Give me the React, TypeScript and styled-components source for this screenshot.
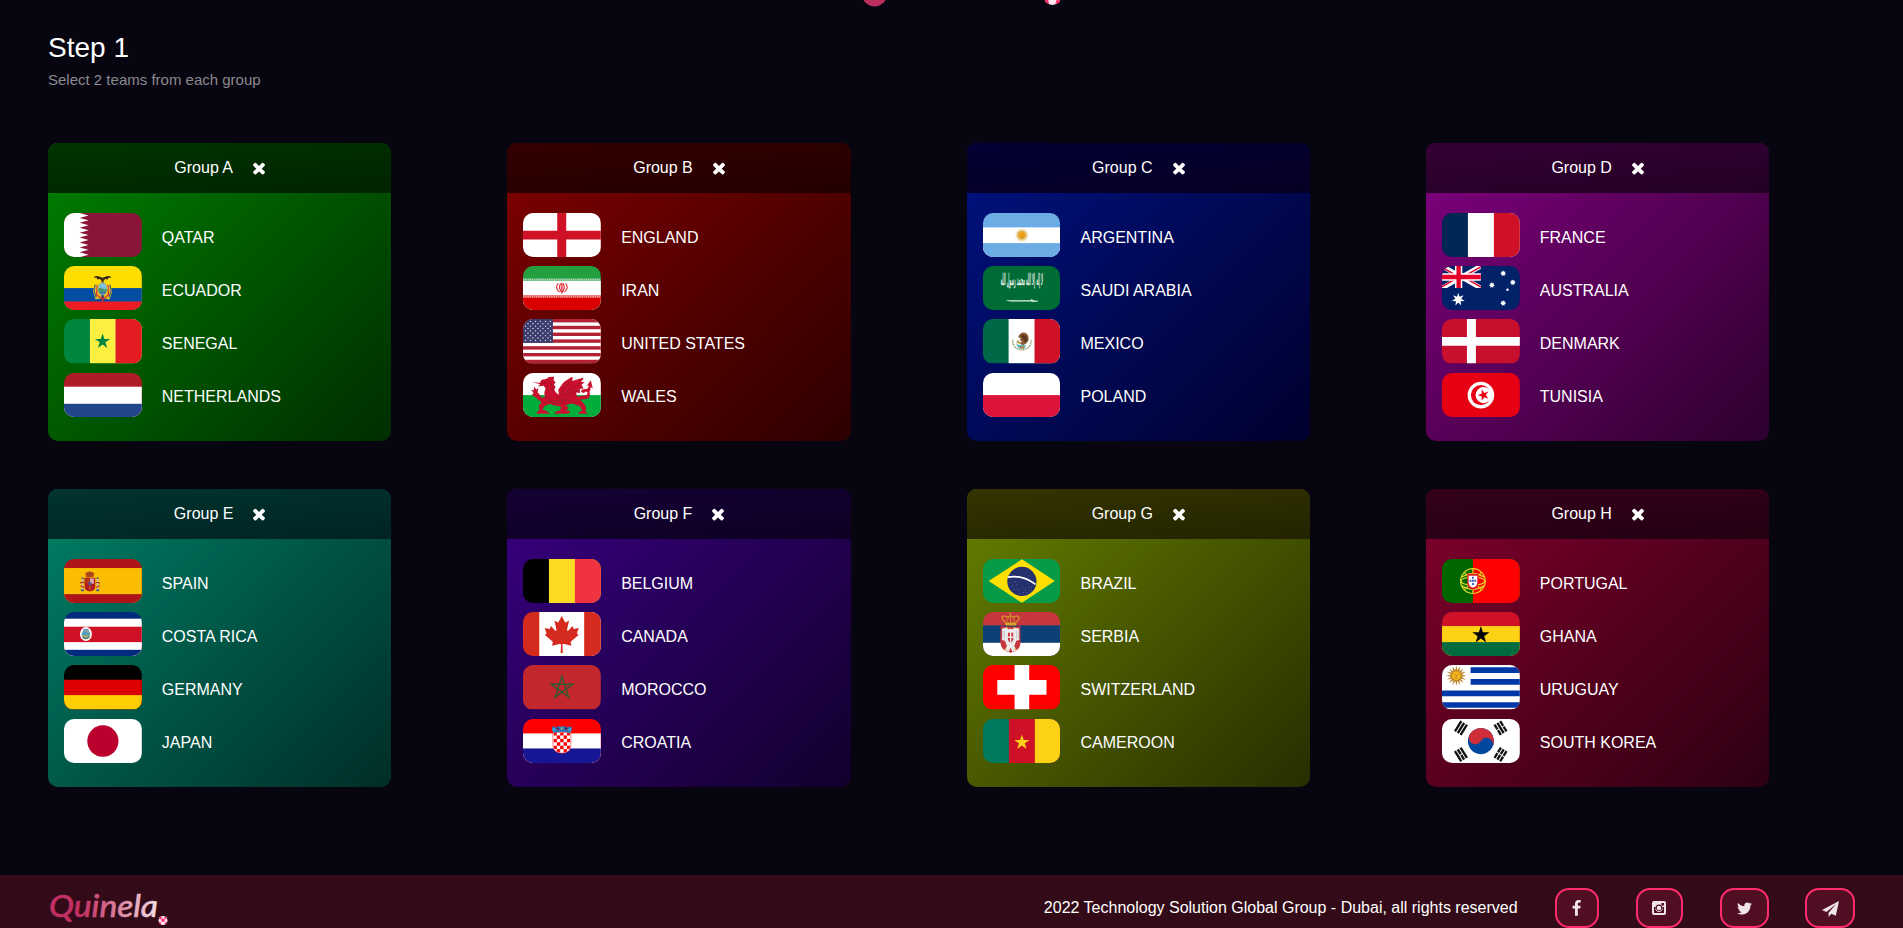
import React from "react";
import styled, { createGlobalStyle } from "styled-components";

const GlobalStyle = createGlobalStyle`
  *, *::before, *::after { box-sizing: border-box; }
  html, body { margin: 0; padding: 0; }
  body {
    background: #07050f;
    color: #fff;
    font-family: "Liberation Sans", Arial, Helvetica, sans-serif;
    font-size: 16px;
    overflow: hidden;
  }
`;

const Page = styled.div`
  display: flex;
  flex-direction: column;
  height: 928px;
  overflow: hidden;
`;

const TopBar = styled.header`
  display: flex;
  justify-content: center;
  height: 8px;
  padding-left: 20px;
`;

const Main = styled.main`
  flex: 1;
  padding: 0 48px;
`;

const Title = styled.h1`
  margin: 0;
  padding-top: 24px;
  font-size: 28px;
  font-weight: 400;
  line-height: 32px;
`;

const Subtitle = styled.p`
  margin: 7px 0 0;
  font-size: 15px;
  line-height: 18px;
  color: #8b8a8f;
`;

const Groups = styled.section`
  display: grid;
  grid-template-columns: repeat(4, 343.33px);
  column-gap: 116px;
  row-gap: 48px;
  margin-top: 54px;
`;

const Card = styled.article<{ $from: string; $to: string }>`
  height: 298px;
  border-radius: 10px;
  overflow: hidden;
  background: linear-gradient(135deg, ${(p) => p.$from}, ${(p) => p.$to});
`;

const CardHeader = styled.header<{ $from: string; $to: string }>`
  display: flex;
  align-items: center;
  justify-content: center;
  gap: 19px;
  height: 50px;
  padding-bottom: 1px;
  background: linear-gradient(175deg, ${(p) => p.$from}, ${(p) => p.$to});
`;

const ClearIcon = styled.svg`
  width: 18px;
  height: 18px;
  margin: 1px -3px 0 -2px;
  fill: #fff;
`;

const Teams = styled.ul`
  margin: 0;
  padding: 19.8px 16px 0;
  list-style: none;
`;

const Team = styled.li`
  display: flex;
  align-items: center;
  gap: 20px;
  height: 44.2px;
  margin-bottom: 9.1px;
`;

const Flag = styled.svg`
  width: 77.8px;
  height: 44.2px;
  flex: none;
  border-radius: 10px;
`;

const TeamName = styled.span`
  padding-top: 5.5px;
  line-height: 18px;
  white-space: nowrap;
`;

const Footer = styled.footer`
  display: flex;
  align-items: flex-start;
  height: 53px;
  padding: 13px 48px 0;
  background: #330b18;
`;

const FooterLogo = styled.svg`
  width: 124px;
  height: 40px;
  margin-right: auto;
`;

const Copyright = styled.p`
  margin: 0 37px 0 0;
  line-height: 40px;
`;

const Socials = styled.nav`
  display: flex;
  gap: 36.5px;
`;

const SocialButton = styled.a<{ $width: number }>`
  display: flex;
  align-items: center;
  justify-content: center;
  width: ${(p) => p.$width}px;
  height: 40px;
  border: 2px solid #ff2b6d;
  border-radius: 14px;
  background: #500e22;
  color: #f1e4e8;
`;

const starPoints = (cx: number, cy: number, r: number, inner = 0.382, n = 5) =>
  Array.from({ length: n * 2 }, (_, i) => {
    const a = (Math.PI * i) / n - Math.PI / 2;
    const k = i % 2 ? r * inner : r;
    return `${(cx + Math.cos(a) * k).toFixed(1)},${(cy + Math.sin(a) * k).toFixed(1)}`;
  }).join(" ");

type StarProps = { x: number; y: number; r: number; fill: string; inner?: number; n?: number };
const Star = ({ x, y, r, fill, inner, n }: StarProps) => (
  <polygon points={starPoints(x, y, r, inner, n)} fill={fill} />
);

// Bands are [colour, start edge] on a 234 x 132 field
const Rows = ({ bands }: { bands: [string, number][] }) => (
  <>{bands.map(([c, y]) => <rect key={y} y={y} width="234" height={132 - y} fill={c} />)}</>
);
const Cols = ({ bands }: { bands: [string, number][] }) => (
  <>{bands.map(([c, x]) => <rect key={x} x={x} width={234 - x} height="132" fill={c} />)}</>
);

const trigram = (x: number, y: number, angle: number, broken: boolean[]) => (
  <g transform={`translate(${x} ${y}) rotate(${angle})`} fill="#111">
    {broken.map((b, i) =>
      b ? (
        <g key={i}>
          <rect x={-18} y={-13.5 + i * 10} width="16.5" height="7" />
          <rect x={1.5} y={-13.5 + i * 10} width="16.5" height="7" />
        </g>
      ) : (
        <rect key={i} x={-18} y={-13.5 + i * 10} width="36" height="7" />
      )
    )}
  </g>
);

const flags: Record<string, React.ReactNode> = {
  QATAR: (
    <>
      <rect width="234" height="132" fill="#8a1538" />
      <polygon
        fill="#fff"
        points={"0,0 " + Array.from({ length: 9 }, (_, i) => `47,${i * 14.67} 74,${i * 14.67 + 7.33}`).join(" ") + " 47,132 0,132"}
      />
    </>
  ),
  ECUADOR: (
    <>
      <Rows bands={[["#ffdd00", 0], ["#034ea2", 66], ["#ed1c24", 106]]} />
      <path d="M92 54l-5 22 8 24 18-4-8-40zM140 54l5 22-8 24-18-4 8-40z" fill="#e8c21a" />
      <path d="M94 56l-4 18 7 20M138 56l4 18-7 20" fill="none" stroke="#29508e" strokeWidth="3" />
      <path d="M100 58l-2 28 18 14 18-14-2-28" fill="none" stroke="#d8323a" strokeWidth="4" />
      <ellipse cx="116" cy="68" rx="16" ry="20" fill="#d9b53a" />
      <ellipse cx="116" cy="68" rx="13" ry="17" fill="#7ac3dd" />
      <path d="M103 68q7-6 13-1t13 0v6q-4 12-13 12t-13-12z" fill="#4f9b62" />
      <path d="M104 76h24q-4 9-12 9t-12-9z" fill="#3d7fb7" />
      <path d="M88 34q10-7 20-2l8 3 8-3q10-5 20 2l-10 1-2 5-8-1-8 9-8-9-8 1-2-5z" fill="#3b2a1c" />
      <path d="M112 44l4 5 4-5v6h-8z" fill="#70543a" />
      <path d="M113 92h7l-1 14h-5z" fill="#b92b33" />
    </>
  ),
  SENEGAL: (
    <>
      <Cols bands={[["#00853f", 0], ["#fdef42", 78], ["#e31b23", 155]]} />
      <Star x={116} y={67} r={24} fill="#00853f" />
    </>
  ),
  NETHERLANDS: <Rows bands={[["#ae1c28", 0], ["#fff", 41], ["#21468b", 92]]} />,
  ENGLAND: (
    <>
      <rect width="234" height="132" fill="#fff" />
      <path d="M103 0h27v132h-27zM0 53h234v26H0z" fill="#ce1124" />
    </>
  ),
  IRAN: (
    <>
      <Rows bands={[["#239f40", 0], ["#fff", 44], ["#da0000", 88]]} />
      <path d="M0 40.500h234" stroke="#a9d8b4" strokeWidth="6" strokeDasharray="5 1.500" />
      <path d="M0 92h234" stroke="#f0a0a0" strokeWidth="6" strokeDasharray="5 1.500" />
      <g fill="none" stroke="#d9262b" strokeWidth="3.500">
        <path d="M106 52q-12 13 4 26M128 52q12 13-4 26M113 52q-7 14 3 26M121 52q7 14-3 26" />
        <path d="M117 50v32" strokeWidth="4" />
      </g>
    </>
  ),
  "UNITED STATES": (
    <>
      <rect width="234" height="132" fill="#fff" />
      {Array.from({ length: 7 }, (_, i) => (
        <rect key={i} y={i * 20.31} width="234" height="10.15" fill="#b22234" />
      ))}
      <rect width="90" height="71" fill="#3c3b6e" />
      {Array.from({ length: 9 }, (_, r) =>
        Array.from({ length: r % 2 ? 5 : 6 }, (_, c) => (
          <circle key={`${r}-${c}`} cx={(r % 2 ? 15 : 7.5) + c * 15} cy={7.1 + r * 7.1} r="2.100" fill="#e6e6ef" />
        ))
      )}
    </>
  ),
  WALES: (
    <>
      <Rows bands={[["#fff", 0], ["#00ad3b", 66]]} />
      <path
        fill="#c8102e"
        d="M28 26L50 30 56 20 70 18 78 12 94 11 92 22 98 28 93 34 98 42 94 50 99 58 108 66 106 50 116 36 124 26 146 12 150 14 148 24 180 14 182 18 174 26 186 28 176 34 182 46 170 48 172 60 160 58 162 70 180 68Q196 66 194 58 188 52 184 60 176 60 174 54 178 46 192 48 200 42 196 36L190 40 204 22 210 46 203 42Q204 52 200 56 206 74 190 78 178 80 172 80L184 92 190 104 188 116 196 122 166 122 172 114 178 112 172 100 150 92 140 92 128 98 138 104 130 112 142 114 138 122 94 122 100 114 112 112 114 100 90 96 82 92 66 98 58 108 72 114 80 122 40 122 44 114 50 110 48 98 56 86Q46 84 40 74L26 66 32 60 24 50 32 52 34 40 40 50 46 44 44 58 50 64 56 74 66 72 64 58 68 46 62 38 44 40 52 34z"
      />
      <g fill="none" stroke="#7c1d2b" strokeWidth="1.600">
        <path d="M82 28q10 14 6 28M112 62l34-44M116 66l56-36M120 70l52-20M70 68q12 20 40 14t50 10M76 84q20 12 50 2" />
        <path d="M58 29h14M104 70l12 12M162 80l18 20M128 80l12-8" />
      </g>
    </>
  ),
  ARGENTINA: (
    <>
      <Rows bands={[["#6cace4", 0], ["#fff", 43], ["#6cace4", 90]]} />
      <Star x={117} y={66} r={21} n={16} inner={0.7} fill="#e9cf8e" />
      <circle cx="117" cy="66" r="11" fill="#f2a81d" stroke="#c9923a" strokeWidth="1.500" />
      <path d="M112 63h3M119 63h3M117 64v4M113 71h8" stroke="#b8701c" strokeWidth="1.500" />
    </>
  ),
  "SAUDI ARABIA": (
    <>
      <rect width="234" height="132" fill="#006c35" />
      <text
        transform="translate(117 58) scale(0.29 1.15)"
        textAnchor="middle"
        fontFamily="'DejaVu Sans', sans-serif"
        fontSize="40"
        textLength="440"
        lengthAdjust="spacingAndGlyphs"
        fill="#fff"
        stroke="#fff"
        strokeWidth="0.800"
      >
        لا إله إلا الله محمد رسول الله
      </text>
      <path d="M68 100q4 3 10 2h66v-3h5v3l16 2v3h-10l-6 1v-2H84q-12 0-16-6z" fill="#e6f0ea" />
    </>
  ),
  MEXICO: (
    <>
      <Cols bands={[["#006847", 0], ["#fff", 77], ["#ce1126", 155]]} />
      <path d="M89 62q0 28 28 30 28-2 28-30" fill="none" stroke="#8f9a5b" strokeWidth="4" strokeDasharray="4 2" />
      <path d="M106 54q4-14 17-14 13 2 14 16 1 12-9 19l-9 4-9-8 8-3-9-6 6-2z" fill="#8a5a33" />
      <path d="M113 50q8-6 16 0l6 12-8 8-6-10z" fill="#5a351f" />
      <path d="M98 72q10 8 18 4l14 4-6 8h-16z" fill="#59b3c0" />
      <path d="M103 62l10 8-2 5-10-4z" fill="#c6a04b" />
      <path d="M110 82h15l-3 6h-9z" fill="#b8802f" />
    </>
  ),
  POLAND: <Rows bands={[["#fff", 0], ["#dc143c", 66]]} />,
  FRANCE: <Cols bands={[["#002654", 0], ["#fff", 78], ["#ce1126", 156]]} />,
  AUSTRALIA: (
    <>
      <rect width="234" height="132" fill="#012169" />
      <svg width="117" height="66" viewBox="0 0 117 66">
        <path d="M0 0l117 66M117 0L0 66" stroke="#fff" strokeWidth="14" />
        <path d="M0 4l50 28M117 63L67 34M-2 63l52-29M65 32l54-31" stroke="#e4002b" strokeWidth="4.500" />
        <path d="M50 0v66M0 33h117" stroke="#fff" strokeWidth="22" />
        <path d="M43.500 0h13v66h-13zM0 26.500h117v13H0z" fill="#e4002b" />
      </svg>
      <Star x={49} y={100} r={20} n={7} inner={0.45} fill="#fff" />
      <Star x={184} y={22} r={9} n={7} inner={0.6} fill="#fff" />
      <Star x={150} y={57} r={9} n={7} inner={0.6} fill="#fff" />
      <Star x={213} y={49} r={9} n={7} inner={0.6} fill="#fff" />
      <Star x={184} y={111} r={9} n={7} inner={0.6} fill="#fff" />
      <Star x={197} y={71} r={5} fill="#fff" inner={0.6} />
    </>
  ),
  DENMARK: (
    <>
      <rect width="234" height="132" fill="#c8102e" />
      <path d="M75 0h27v132H75zM0 54h234v26H0z" fill="#fff" />
    </>
  ),
  TUNISIA: (
    <>
      <rect width="234" height="132" fill="#e70013" />
      <circle cx="117" cy="66" r="40" fill="#fff" />
      <circle cx="117" cy="66" r="30" fill="#e70013" />
      <circle cx="125" cy="66" r="24" fill="#fff" />
      <polygon points={starPoints(0, 0, 18)} fill="#e70013" transform="translate(125 66) rotate(-90)" />
    </>
  ),
  SPAIN: (
    <>
      <Rows bands={[["#ad1519", 0], ["#fabd00", 27], ["#ad1519", 105]]} />
      <path d="M64 42q13-8 27 0l-3 12H67z" fill="#b5421f" />
      <path d="M77 36v8M70 48h15" stroke="#8d5a1a" strokeWidth="2.500" />
      <path d="M62 56h32v28q-2 13-16 13t-16-13z" fill="#b01c22" />
      <path d="M78 58h12v16H78z" fill="#d9a6b5" />
      <path d="M62 56h16v18H62z" fill="#b5321f" />
      <circle cx="78" cy="74" r="5" fill="#4a5b93" />
      <path d="M78 80v14" stroke="#d89a1d" strokeWidth="2" />
      <path d="M53 60h5v34h-5zM99 60h5v34h-5z" fill="#c9b9a8" />
      <path d="M51 90h9v6h-9zM97 90h9v6h-9zM53 55h6v5h-6zM98 55h6v5h-6z" fill="#4b6689" />
      <path d="M49 73q5-6 12-2M96 71q7-4 12 3M50 80l10 5M97 85l10-5" stroke="#a8201f" strokeWidth="3" fill="none" />
    </>
  ),
  "COSTA RICA": (
    <>
      <Rows bands={[["#002b7f", 0], ["#fff", 20], ["#ce1126", 44], ["#fff", 90], ["#002b7f", 113]]} />
      <ellipse cx="66" cy="66" rx="18" ry="21" fill="#fff" />
      <ellipse cx="66" cy="67" rx="13" ry="15" fill="#8ba7a0" />
      <path d="M55 62q5-8 11-3t11 3v7H55z" fill="#4d9ec2" />
      <path d="M57 70h18v4H57z" fill="#b3a058" />
      <path d="M57 54q9-5 18 0" stroke="#5a86b9" strokeWidth="3" fill="none" />
      <path d="M56 74q10 10 20 0" stroke="#4e7c5b" strokeWidth="3" fill="none" />
    </>
  ),
  GERMANY: <Rows bands={[["#000", 0], ["#d00", 44], ["#ffce00", 90]]} />,
  JAPAN: (
    <>
      <rect width="234" height="132" fill="#fff" />
      <circle cx="117" cy="66" r="47" fill="#bc002d" />
    </>
  ),
  BELGIUM: <Cols bands={[["#000", 0], ["#fdda24", 78], ["#ef3340", 156]]} />,
  CANADA: (
    <>
      <Cols bands={[["#d52b1e", 0], ["#fff", 49], ["#d52b1e", 184]]} />
      <path
        transform="translate(60 12) scale(0.221 0.216)"
        fill="#d52b1e"
        d="M383.800 351.700c2.500-2.500 105.200-92.400 105.200-92.400l-17.500-7.500c-10-4.900-7.400-11.500-5-17.400 2.400-7.600 20.100-67.300 20.100-67.300s-47.700 10-57.700 12.500c-7.500 2.400-10-2.500-12.500-7.500s-15-32.400-15-32.400-52.600 59.900-55.100 62.300c-10 7.500-20.100 0-17.600-10 0-10 27.600-129.600 27.600-129.600s-30.100 17.400-40.100 22.400c-7.500 5-12.600 5-17.600-5C293.500 72.300 255.900 0 255.900 0s-37.500 72.300-42.500 79.800c-5 10-10 10-17.600 5-10-5-40.100-22.400-40.100-22.400S183.300 182 183.300 192c2.500 10-7.500 17.500-17.600 10-2.500-2.500-55.100-62.300-55.100-62.300S98.100 167 95.600 172s-5 9.900-12.500 7.500C73 177 25.400 167 25.400 167s17.600 59.700 20.100 67.300c2.400 6 5 12.500-5 17.400L23 259.300s102.600 89.900 105.200 92.400c5.100 5 10 7.500 5.100 22.500-5.100 15-10.100 35.100-10.100 35.100s95.200-20.100 105.300-22.600c8.700-.9 18.300 2.500 18.300 12.500S241 512 241 512h30s-5.800-102.700-5.800-112.800 9.500-13.400 18.400-12.500c10 2.500 105.200 22.600 105.200 22.600s-5-20.100-10-35.100 0-17.500 5-22.500z"
      />
    </>
  ),
  MOROCCO: (
    <>
      <rect width="234" height="132" fill="#c1272d" />
      <path d="M117 34L137.500 96 84 57.500h66L96.500 96z" fill="none" stroke="#2c5a2f" strokeWidth="4" />
    </>
  ),
  CROATIA: (
    <>
      <Rows bands={[["#f00", 0], ["#fff", 43], ["#171796", 88]]} />
      <path d="M90 40h54v38q0 24-27 24T90 78z" fill="#fff" />
      <clipPath id="shield">
        <path d="M91.500 40h51v38q0 22-25.500 22.500T91.500 78z" />
      </clipPath>
      <g clipPath="url(#shield)" fill="#f00">
        {Array.from({ length: 30 }, (_, i) =>
          (Math.floor(i / 5) + (i % 5)) % 2 === 0 ? (
            <rect key={i} x={91.5 + (i % 5) * 10.2} y={39 + Math.floor(i / 5) * 10.2} width="10.2" height="10.2" />
          ) : null
        )}
      </g>
      <path d="M90 40v38q0 24 27 24t27-24V40" fill="none" stroke="#f00" strokeWidth="1.500" />
      <path d="M86 26l7-4 7 4 6-5 6 2 5-3 5 3 6-2 6 5 7-4 7 4-6 16q-25-6-50 0z" fill="#3476b5" />
      <circle cx="93" cy="32" r="5" fill="#2da3dc" />
      <circle cx="105" cy="29" r="4.500" fill="#27307c" />
      <circle cx="117" cy="28" r="4.500" fill="#74a184" />
      <circle cx="129" cy="29" r="4.500" fill="#27307c" />
      <circle cx="141" cy="32" r="5" fill="#2da3dc" />
      <path d="M101 31h8M125 32h8" stroke="#d2393c" strokeWidth="2" />
    </>
  ),
  BRAZIL: (
    <>
      <rect width="234" height="132" fill="#089b47" />
      <path d="M117 1l99 65-99 65L17 66z" fill="#fedf00" />
      <ellipse cx="117" cy="67" rx="44" ry="43.500" fill="#26306e" />
      <path d="M75 54q45-7 83 22" fill="none" stroke="#fff" strokeWidth="5" />
      <g fill="#8d95bb">
        {[[82, 70], [90, 80], [100, 76], [105, 90], [94, 92], [118, 84], [128, 92], [138, 86], [122, 100], [146, 84], [110, 104], [98, 68], [132, 101], [147, 94]].map(([x, y]) => (
          <circle key={`${x}-${y}`} cx={x} cy={y} r="1.300" />
        ))}
      </g>
    </>
  ),
  SERBIA: (
    <>
      <Rows bands={[["#c6363c", 0], ["#0c4076", 40], ["#fff", 92]]} />
      <path d="M53 41q29 6 59 0l1 48q0 28-30 33-30-5-31-33z" fill="#c6363c" />
      <path d="M57 50l14-4 6 6 5-3 6 3 6-6 15 4v34l-9 2-6 16 8 12-14 5-5-13-5 13-14-5 8-12-6-16-9-2z" fill="#ecebee" />
      <path d="M75 62h16v20q-2 8-8 9-6-1-8-9z" fill="#c6363c" />
      <path d="M81 62h4v28h-4zM75 73h16v4H75z" fill="#fff" />
      <path d="M60 56v24M65 54v28M101 54v28M106 56v24" stroke="#aeaab3" strokeWidth="1.500" />
      <path d="M71 45l5 5M95 45l-5 5M66 110l6 2M100 110l-6 2" stroke="#d9a421" strokeWidth="3" />
      <path d="M66 31h35l-2 9H68z" fill="#d7a52b" />
      <path d="M67 31q-15-13-7-18 12-3 15 5 2-7 8-7t8 7q3-8 15-5 8 5-7 18" fill="none" stroke="#d7a52b" strokeWidth="3" />
      <path d="M83 6v24M79 5h8M72 22v8M94 22v8" stroke="#c79a33" strokeWidth="2.500" />
    </>
  ),
  SWITZERLAND: (
    <>
      <rect width="234" height="132" fill="#f00" />
      <path d="M95 0h44v132H95zM43 45h148v44H43z" fill="#fff" />
    </>
  ),
  CAMEROON: (
    <>
      <Cols bands={[["#007a5e", 0], ["#ce1126", 78], ["#fcd116", 156]]} />
      <Star x={117} y={70} r={24} fill="#fcd116" />
    </>
  ),
  PORTUGAL: (
    <>
      <Cols bands={[["#060", 0], ["#f00", 93]]} />
      <g fill="none" stroke="#e3dd2a" strokeWidth="3.500">
        <circle cx="93" cy="66" r="37" />
        <ellipse cx="93" cy="66" rx="36" ry="12" />
        <path d="M67 40l52 52M119 40L67 92M93 30v72M60 54q33-22 66 0M60 80q33 22 66 0" />
      </g>
      <path d="M76 44h34v27q-1 19-17 21-16-2-17-21z" fill="#e31b23" />
      <path d="M80 50h26v21q-1 12-13 14-12-2-13-14z" fill="#fff" />
      <path d="M90.500 53h5v6h-5zM83.500 62h5v6h-5zM90.500 62h5v6h-5zM97.500 62h5v6h-5zM90.500 72h5v6h-5z" fill="#244aa5" />
    </>
  ),
  GHANA: (
    <>
      <Rows bands={[["#ce1126", 0], ["#fcd116", 42], ["#006b3f", 90]]} />
      <Star x={117} y={69} r={27} fill="#000" />
    </>
  ),
  URUGUAY: (
    <>
      <rect width="234" height="132" fill="#fff" />
      <path d="M86 7h148v17H86zM86 42h148v17H86zM0 76h234v17H0zM0 111h234v17H0z" fill="#0038a8" />
      <Star x={43} y={32} r={31} n={16} inner={0.5} fill="#b8801c" />
      <circle cx="43" cy="32" r="14" fill="#f3b61f" stroke="#b07a16" strokeWidth="1" />
      <path d="M37 28h4M46 28h4M43 30v5M39 39h9" stroke="#8c5f12" strokeWidth="1.500" />
    </>
  ),
  "SOUTH KOREA": (
    <>
      <rect width="234" height="132" fill="#fff" />
      <g transform="translate(117 66) rotate(30)">
        <circle r="39" fill="#0047a0" />
        <path d="M-39 0A39 39 0 0 1 39 0 19.500 19.500 0 0 0 0 0 19.500 19.500 0 0 1-39 0z" fill="#cd2e3a" />
      </g>
      {trigram(57, 27, -58, [false, false, false])}
      {trigram(176, 27, 58, [true, false, true])}
      {trigram(57, 106, 58, [false, true, false])}
      {trigram(176, 106, -58, [true, true, true])}
    </>
  ),
};

type Group = { name: string; body: [string, string]; head: [string, string]; teams: string[] };

const groups: Group[] = [
  { name: "A", body: ["#008000", "#002d00"], head: ["#003400", "#002300"], teams: ["QATAR", "ECUADOR", "SENEGAL", "NETHERLANDS"] },
  { name: "B", body: ["#800000", "#2d0000"], head: ["#340000", "#230000"], teams: ["ENGLAND", "IRAN", "UNITED STATES", "WALES"] },
  { name: "C", body: ["#001280", "#00002d"], head: ["#040034", "#040023"], teams: ["ARGENTINA", "SAUDI ARABIA", "MEXICO", "POLAND"] },
  { name: "D", body: ["#800080", "#2d002d"], head: ["#340034", "#230023"], teams: ["FRANCE", "AUSTRALIA", "DENMARK", "TUNISIA"] },
  { name: "E", body: ["#008066", "#002d28"], head: ["#00342e", "#002323"], teams: ["SPAIN", "COSTA RICA", "GERMANY", "JAPAN"] },
  { name: "F", body: ["#380080", "#12002d"], head: ["#150034", "#0e0023"], teams: ["BELGIUM", "CANADA", "MOROCCO", "CROATIA"] },
  { name: "G", body: ["#668000", "#282d00"], head: ["#343400", "#232300"], teams: ["BRAZIL", "SERBIA", "SWITZERLAND", "CAMEROON"] },
  { name: "H", body: ["#80002c", "#2d0012"], head: ["#34001c", "#230012"], teams: ["PORTUGAL", "GHANA", "URUGUAY", "SOUTH KOREA"] },
];

const Ball = ({ cx, cy, r }: { cx: number; cy: number; r: number }) => (
  <g transform={`translate(${cx} ${cy}) scale(${r / 10})`}>
    <circle r="10" fill="#ffe9ef" />
    <path d="M-4-2l4-3 4 3-1 5h-6zM-9-4l4-5 3 2-3 5zM9-4L4-9 2-7l3 4zM-9 3l4 1 1 5-4-2zM9 3L5 4 3 9l5-2z" fill="#ff2b6d" />
  </g>
);

const FacebookIcon = () => (
  <svg width="17" height="17" viewBox="0 0 1792 1792" fill="currentColor">
    <path d="M1343 12v264h-157q-86 0-116 36t-30 108v189h293l-39 296h-254v759h-306v-759h-255v-296h255v-218q0-186 104-288.500t277-102.500q147 0 228 12z" />
  </svg>
);

const InstagramIcon = () => (
  <svg width="16" height="16" viewBox="0 0 16 16">
    <rect x="1" y="1" width="14" height="14" rx="2" fill="currentColor" />
    <path d="M3 7h1.600a3.600 3.600 0 1 0 6.800 0H13v6H3zM10.500 3H13v2.400h-2.500z" fill="#500e22" />
    <circle cx="8" cy="8" r="3.500" fill="#500e22" />
    <circle cx="8" cy="8" r="2.300" fill="currentColor" />
    <path d="M3 7.500h1.500a3.600 3.600 0 0 0 7 0H13V13H3z" fill="none" />
    <path d="M4.600 9.200a3.600 3.600 0 0 0 6.800 0" fill="none" stroke="currentColor" strokeWidth="0.800" />
  </svg>
);

const TwitterIcon = () => (
  <svg width="17" height="17" viewBox="0 0 1792 1792" fill="currentColor">
    <path d="M1684 408q-67 98-162 167 1 14 1 42 0 130-38 259.500t-115.500 248.500-184.500 210.500-258 146-323 54.500q-271 0-496-145 35 4 78 4 225 0 401-138-105-2-188-64.500t-114-159.500q33 5 61 5 43 0 85-11-112-23-185.500-111.500t-73.500-205.500v-4q68 38 146 41-66-44-105-115t-39-154q0-88 44-163 121 149 294.500 238.500t371.500 99.500q-8-38-8-74 0-134 94.500-228.500t228.500-94.500q140 0 236 102 109-21 205-78-37 115-142 178 93-10 186-50z" />
  </svg>
);

const PlaneIcon = () => (
  <svg width="17" height="17" viewBox="0 0 16 16" fill="currentColor">
    <path d="M16 1L0 9.500l4.200 1.800L13.500 3.500 6.200 12v4l2.600-3 4.200 1.800z" />
  </svg>
);

const socials = [
  { label: "Facebook", width: 44.6, icon: <FacebookIcon /> },
  { label: "Instagram", width: 47.3, icon: <InstagramIcon /> },
  { label: "Twitter", width: 49, icon: <TwitterIcon /> },
  { label: "Telegram", width: 50, icon: <PlaneIcon /> },
];

const GroupCard = ({ group }: { group: Group }) => (
  <Card $from={group.body[0]} $to={group.body[1]}>
    <CardHeader $from={group.head[0]} $to={group.head[1]}>
      <span>Group {group.name}</span>
      <ClearIcon viewBox="0 0 1792 1792">
        <path d="M1490 1322q0 40-28 68l-136 136q-28 28-68 28t-68-28l-294-294-294 294q-28 28-68 28t-68-28l-136-136q-28-28-28-68t28-68l294-294-294-294q-28-28-28-68t28-68l136-136q28-28 68-28t68 28l294 294 294-294q28-28 68-28t68 28l136 136q28 28 28 68t-28 68l-294 294 294 294q28 28 28 68z" />
      </ClearIcon>
    </CardHeader>
    <Teams>
      {group.teams.map((team) => (
        <Team key={team}>
          <Flag viewBox="0 0 234 132" preserveAspectRatio="none">{flags[team]}</Flag>
          <TeamName>{team}</TeamName>
        </Team>
      ))}
    </Teams>
  </Card>
);

export default function App() {
  return (
    <Page>
      <GlobalStyle />
      <TopBar>
        <svg width="200" height="8" viewBox="862 0 200 8">
          <circle cx="874.500" cy="-6" r="12.500" fill="#bb2f5f" />
          <Ball cx={1052.5} cy={-3.5} r={8.5} />
        </svg>
      </TopBar>
      <Main>
        <Title>Step 1</Title>
        <Subtitle>Select 2 teams from each group</Subtitle>
        <Groups>
          {groups.map((g) => (
            <GroupCard key={g.name} group={g} />
          ))}
        </Groups>
      </Main>
      <Footer>
        <FooterLogo viewBox="0 0 124 40">
          <defs>
            <linearGradient id="brand" x1="0" x2="1">
              <stop offset="0.3" stopColor="#c22f62" />
              <stop offset="1" stopColor="#f6dfe6" />
            </linearGradient>
          </defs>
          <text
            x="1"
            y="29"
            fontFamily="Lato, sans-serif"
            fontStyle="italic"
            fontWeight="500"
            fontSize="31"
            textLength="109"
            lengthAdjust="spacingAndGlyphs"
            fill="url(#brand)"
            stroke="url(#brand)"
            strokeWidth="0.500"
          >
            Quinela
          </text>
          <Ball cx={115} cy={32.5} r={4.5} />
        </FooterLogo>
        <Copyright>2022 Technology Solution Global Group - Dubai, all rights reserved</Copyright>
        <Socials>
          {socials.map((s) => (
            <SocialButton key={s.label} $width={s.width} aria-label={s.label}>
              {s.icon}
            </SocialButton>
          ))}
        </Socials>
      </Footer>
    </Page>
  );
}
